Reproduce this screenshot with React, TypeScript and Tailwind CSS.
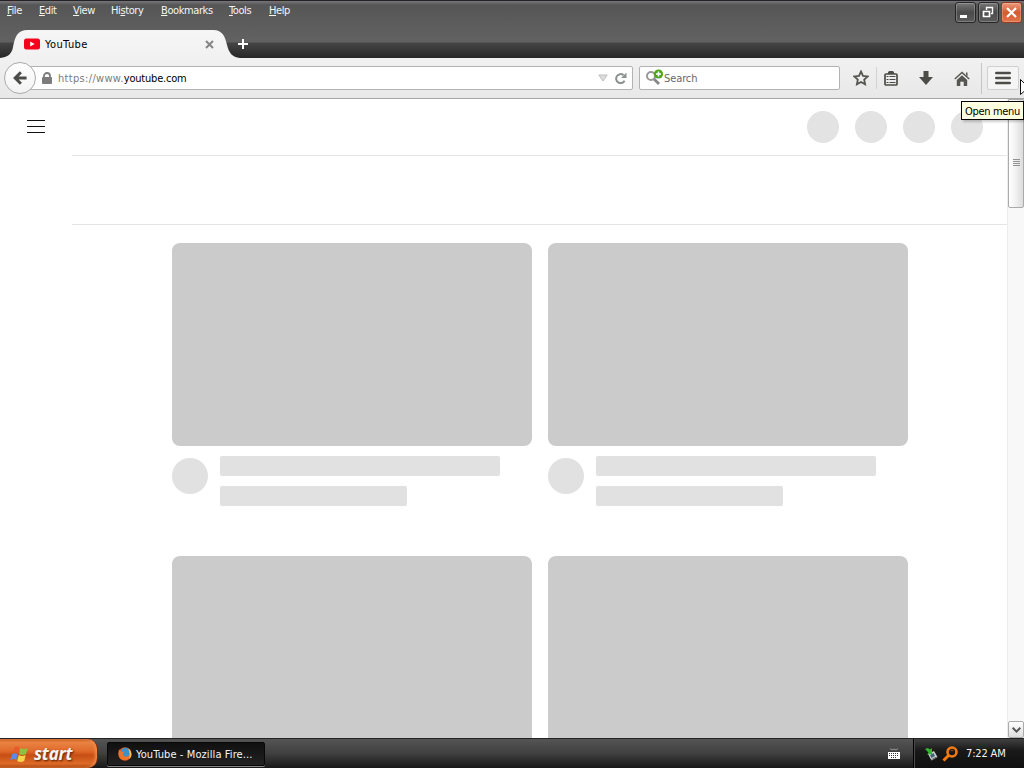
import type { ReactNode } from "react";

interface MenuEntry {
  label: string;
  accessKey: number;
  width: string;
}

const menus: MenuEntry[] = [
  { label: "File", accessKey: 0, width: "w-8" },
  { label: "Edit", accessKey: 0, width: "w-[34px]" },
  { label: "View", accessKey: 0, width: "w-[38px]" },
  { label: "History", accessKey: 2, width: "w-[50px]" },
  { label: "Bookmarks", accessKey: 0, width: "w-[68px]" },
  { label: "Tools", accessKey: 0, width: "w-10" },
  { label: "Help", accessKey: 0, width: "w-8" },
];

function MenuBar() {
  return (
    <nav className="flex pl-[7px] pt-[3px] tracking-[-0.4px] text-[#f4f4f4]">
      {menus.map(({ label, accessKey, width }) => (
        <span key={label} className={`${width} whitespace-nowrap leading-[14px]`}>
          {label.slice(0, accessKey)}
          <span className="underline underline-offset-1">{label[accessKey]}</span>
          {label.slice(accessKey + 1)}
        </span>
      ))}
    </nav>
  );
}

function WindowButton({ label, close, children }: { label: string; close?: boolean; children: ReactNode }) {
  return (
    <button
      aria-label={label}
      className={`h-[21px] w-[21px] rounded-[3px] border ${
        close
          ? "border-[#963b20] bg-linear-to-b from-[#e79b7b] via-[#d65a31] to-[#df7549]"
          : "border-[#252525] bg-linear-to-b from-[#777] via-[#4b4b4b] to-[#5c5c5c]"
      } shadow-[inset_0_0_0_1px_#ffffff38]`}
    >
      <svg width="19" height="19" viewBox="0 0 19 19" fill="none" stroke="#fff">
        {children}
      </svg>
    </button>
  );
}

function WindowControls() {
  return (
    <div className="flex gap-[2px] pr-[2px] pt-px">
      <WindowButton label="Minimize">
        <path d="M4 13.5h7" strokeWidth="3" />
      </WindowButton>
      <WindowButton label="Restore">
        <path d="M7.5 7V4.5h6v6H12M7 4.5h7" strokeWidth="1.4" />
        <path d="M4.5 8.5h6v5h-6zM4 8.5h7" strokeWidth="1.7" />
      </WindowButton>
      <WindowButton label="Close" close>
        <path d="m5 5 9 9M14 5l-9 9" strokeWidth="2.2" />
      </WindowButton>
    </div>
  );
}

function TabStrip() {
  return (
    <div className="flex h-7">
      <div className="relative flex w-[229px] items-center pl-6">
        <svg className="absolute left-0 top-0" width="241" height="28" viewBox="0 0 241 28" aria-hidden="true">
          <defs>
            <linearGradient id="tab" x2="0" y2="1">
              <stop stopColor="#f6f6f6" />
              <stop offset="1" stopColor="#f1f1f1" />
            </linearGradient>
          </defs>
          <path
            d="M0 28C9 27 12 23 13 17 15 7 17 0 28 0H213C223 0 225 7 227 15 229 23 232 27 240 28Z"
            fill="url(#tab)"
          />
        </svg>
        <svg className="relative" width="16" height="12" viewBox="0 0 16 12" aria-hidden="true">
          <rect y=".5" width="16" height="11" rx="2.5" fill="#f5001d" />
          <path d="m6.2 3.5 4.4 2.5-4.4 2.5z" fill="#fff" />
        </svg>
        <span className="relative ml-[5px] flex-1 pt-px tracking-[0.4px] text-black">YouTube</span>
        <svg className="relative mr-[15px]" width="9" height="9" viewBox="0 0 9 9" stroke="#858585" strokeWidth="2">
          <path d="m1 1 7 7M8 1 1 8" />
        </svg>
      </div>
      <svg className="ml-2 mt-2" width="12" height="12" viewBox="0 0 12 12" stroke="#fff" strokeWidth="2">
        <path d="M6 1v10M1 6h10" />
      </svg>
    </div>
  );
}

function Toolbar() {
  return (
    <div className="flex h-[41px] items-center border-b border-[#a5a5a5] bg-linear-to-b from-[#f1f1f1] to-[#e8e8e8] pl-1">
      <button
        aria-label="Back"
        className="relative flex size-8 shrink-0 items-center justify-center rounded-full border border-[#aaa] bg-linear-to-b from-white to-[#f3f3f3]"
      >
        <svg width="14" height="14" viewBox="0 0 16 16" fill="none" stroke="#4c4c48" strokeWidth="3.4">
          <path d="M9 1.5 2.5 8 9 14.5M3 8h12.5" />
        </svg>
      </button>
      <div className="-ml-2 flex h-6 w-[605px] shrink-0 items-center rounded-r-[2px] border border-[#b3b3b3] bg-white pl-[13px] pr-[5px]">
        <svg width="10" height="12" viewBox="0 0 10 12" aria-hidden="true">
          <path d="M2 6V4a3 3 0 0 1 6 0v2" fill="none" stroke="#7c7c7c" strokeWidth="1.8" />
          <rect y="5" width="10" height="7" rx="1" fill="#7c7c7c" />
        </svg>
        <span className="ml-[6px] flex-1 whitespace-nowrap pt-[2px] tracking-[0.32px] text-[#7c7c7c]">
          https://www.<span className="tracking-[-0.2px] text-black">youtube.com</span>
        </span>
        <svg width="10" height="8" viewBox="0 0 10 8" aria-hidden="true">
          <path d="M.8 1h8.4L5 7z" fill="#ddd" stroke="#bebebe" />
        </svg>
        <svg className="ml-[7px]" width="12" height="13" viewBox="0 0 12 13" aria-hidden="true">
          <path d="M9.6 8.8A4.5 4.5 0 1 1 8.5 3.1" fill="none" stroke="#8b9290" strokeWidth="2" />
          <path d="M11.5.5V6H6z" fill="#8b9290" />
        </svg>
      </div>
      <div className="ml-[6px] flex h-6 w-[201px] shrink-0 items-center rounded-[2px] border border-[#b3b3b3] bg-white pl-[6px] text-[#686868]">
        <svg width="18" height="18" viewBox="0 0 18 18" fill="none" aria-hidden="true">
          <circle cx="5" cy="7" r="4" stroke="#999" strokeWidth="2" />
          <path d="m8 10 5 5" stroke="#888" strokeWidth="2.8" />
          <circle cx="12.5" cy="5" r="4.6" fill="#50a51c" />
          <path d="M12.5 2.5v5M10 5h5" stroke="#fff" strokeWidth="1.5" />
        </svg>
        <span className="pt-[2px] tracking-[-0.1px]">Search</span>
      </div>
      <div className="ml-[13px] flex items-center">
        <svg width="16" height="16" viewBox="0 0 16 16" fill="none" stroke="#555550" strokeWidth="1.8">
          <path d="m8 1.5 2 4.3 4.7.6-3.5 3.2.9 4.7L8 12l-4.1 2.3.9-4.7L1.3 6.4 6 5.8z" />
        </svg>
        <span className="ml-[7px] h-[22px] w-px bg-[#d2d2d2]" />
        <svg className="ml-[7px]" width="14" height="15" viewBox="0 0 14 15" fill="none" stroke="#4c4c48">
          <path d="M4 3a3 3 0 0 1 6 0" fill="#4c4c48" />
          <rect x="1" y="3" width="12" height="11" rx="1" strokeWidth="1.7" />
          <path d="M2.5 5.5h2m1 0h6M2.5 8.5h2m1 0h6M2.5 11.5h2m1 0h6" />
        </svg>
        <svg className="ml-[21px]" width="14" height="14" viewBox="0 0 14 14" fill="#4c4c48">
          <path d="M4.500 0h5v6H14l-7 8-7-8h4.500z" />
        </svg>
        <svg className="ml-[21px]" width="16" height="15" viewBox="0 0 16 15" fill="#565652">
          <path d="M.8 8 8 1.5 15.2 8" fill="none" stroke="#565652" strokeWidth="1.5" />
          <path d="M12 1.5h1.5v4L12 4zM8 4.2 13.2 9v6H9.7v-4.2H6.3V15H2.8V9z" />
        </svg>
        <span className="ml-[11px] h-[31px] w-px bg-[#c5c5c5]" />
        <button
          aria-label="Menu"
          className="ml-[5px] flex h-6 w-8 items-center justify-center rounded-[2px] border border-[#d0d0d0] bg-[#f5f5f5]"
        >
          <svg width="16" height="14" viewBox="0 0 16 14" stroke="#4c4c48" strokeWidth="2.6" strokeLinecap="round">
            <path d="M1.3 2h13.4M1.3 7h13.4M1.3 12h13.4" />
          </svg>
        </button>
      </div>
    </div>
  );
}

function VideoPlaceholder() {
  return (
    <div className="h-[313px] w-[360px]">
      <div className="h-[203px] rounded-lg bg-[#cbcbcb]" />
      <div className="flex pt-[10px]">
        <div className="mt-[2px] size-9 rounded-full bg-[#e1e1e1]" />
        <div className="ml-3">
          <div className="h-5 w-[280px] rounded-[2px] bg-[#e1e1e1]" />
          <div className="mt-[10px] h-5 w-[187px] rounded-[2px] bg-[#e1e1e1]" />
        </div>
      </div>
    </div>
  );
}

function Page() {
  return (
    <main className="h-full flex-1 overflow-hidden bg-white">
      <header className="flex h-14 items-center justify-between pl-[27px] pr-6">
        <svg width="18" height="14" viewBox="0 0 18 14" stroke="#111">
          <path d="M0 .5h18M0 6.5h18M0 12.5h18" />
        </svg>
        <div className="flex gap-4">
          {[0, 1, 2, 3].map((i) => (
            <div key={i} className="size-8 rounded-full bg-[#e3e3e3]" />
          ))}
        </div>
      </header>
      <div className="ml-[72px] h-[70px] border-y border-[#e5e5e5]" />
      <div className="ml-[172px] flex w-[736px] flex-wrap gap-x-4 pt-[18px]">
        {[0, 1, 2, 3].map((i) => (
          <VideoPlaceholder key={i} />
        ))}
      </div>
    </main>
  );
}

function Scrollbar() {
  return (
    <div className="flex w-[17px] flex-col justify-between border-l border-[#ececec] bg-[#f8f8f8]">
      <div className="flex h-[109px] items-center justify-center rounded-b-[2px] border border-[#aaa] bg-linear-to-r from-white via-[#f0f0f0] to-[#dcdcdc] pt-[19px]">
        <svg width="7" height="8" viewBox="0 0 7 8" stroke="#929292">
          <path d="M0 .5h7M0 2.5h7M0 4.5h7M0 6.5h7" />
        </svg>
      </div>
      <button
        aria-label="Scroll down"
        className="flex h-[17px] w-4 items-center justify-center rounded-[2px] border border-[#aaa] bg-linear-to-b from-white to-[#ddd]"
      >
        <svg width="9" height="6" viewBox="0 0 9 6" fill="none" stroke="#555" strokeWidth="2">
          <path d="m.7.8 3.8 3.8L8.3.8" />
        </svg>
      </button>
    </div>
  );
}

function Taskbar() {
  return (
    <footer className="flex h-[30px] items-center border-t border-[#222] bg-linear-to-b from-[#555] via-[#404040] via-50% to-[#181818] text-[#f4f4f4]">
      <button className="flex h-full w-[98px] items-center rounded-r-[10px] border-r border-[#7c2900] bg-[linear-gradient(#c45a22,#e98343_12%,#e0692a_42%,#c74e14_56%,#dd6b28_85%,#a4410f)] pl-[10px] shadow-[inset_-2px_0_3px_#f08a4a]">
        <svg width="19" height="18" viewBox="0 0 19 18" aria-hidden="true">
          <path d="M4.2 2.5q2.5-2 5.2-.2L8 8.2q-2.7-2-5.4 0z" fill="#e45b2c" />
          <path d="M10.5 3q3.5 2 7.3 0L16 9q-3.5 2-7 0z" fill="#87c442" />
          <path d="M2.2 9.3q2.7-2 5.5 0L6.2 15q-3-2-6 0z" fill="#588bea" />
          <path d="M8.7 10q3.5 2 7 0l-1.5 6q-3.5 2-7 0z" fill="#f8d448" />
        </svg>
        <span className="ml-[5px] font-['Noto_Sans','Open_Sans',sans-serif] text-[17px] leading-none font-bold italic tracking-[-0.2px] [text-shadow:1px_1px_2px_#542000]">
          start
        </span>
      </button>
      <button className="ml-[9px] flex h-6 w-[158px] items-center rounded-[2px] border border-[#080808] bg-linear-to-b from-[#101010] to-[#222] pl-[10px] shadow-[0_1px_0_#888]">
        <svg width="14" height="14" viewBox="0 0 14 14" aria-hidden="true">
          <circle cx="7" cy="7" r="6.7" fill="#e65b22" />
          <circle cx="7.5" cy="5.6" r="4.8" fill="#3b91ca" />
          <path d="M1 2.5 4 5l3-.5-2 2c0 4 5 4 7 1 0 4-3 6-6 5.5C2 13-.5 9 1 2.5" fill="#ed7428" />
          <path d="M10 1.5c4 2 4.5 8 1 10.5 1-3 1-7-1-10.5" fill="#ffc34b" />
        </svg>
        <span className="ml-1 whitespace-nowrap pt-[2px] tracking-[0.1px]">YouTube - Mozilla Fire...</span>
      </button>
      <svg className="ml-auto" width="12" height="12" viewBox="0 0 12 12" aria-hidden="true">
        <path d="M2 .5 4 2l2-1 2 1 2-1.5" fill="none" stroke="#999" />
        <rect y="4" width="12" height="7" fill="#fff" />
        <path d="M1 5.5h10M1 7.5h10M3 9.5h6" stroke="#333" strokeDasharray="1 1" />
      </svg>
      <div className="ml-[13px] flex h-full w-[111px] items-center border-l border-black bg-linear-to-b from-[#414141] via-[#191919] via-40% to-[#101010] pl-[10px] shadow-[inset_1px_0_0_#4a4a4a]">
        <svg width="15" height="16" viewBox="0 0 15 16" aria-hidden="true">
          <path d="m4 8 6-3 3.5 6-6 3.5z" fill="#c9ced0" />
          <path d="m6 9 3.5-2 1.5 3-3.5 2z" fill="#426475" />
          <path d="m7.5 13.5 5-2.5" stroke="#666" />
          <path d="m1 3 3-1 2 1.5L8 2v6l-5 .5 1.5-2z" fill="#35b535" />
        </svg>
        <svg className="ml-[3px]" width="16" height="16" viewBox="0 0 16 16" fill="none" stroke="#f47b14">
          <circle cx="10" cy="6" r="4.5" strokeWidth="2.6" />
          <path d="m6.5 9.5-5 5" strokeWidth="3" />
          <path d="M8.500 5a2 2 0 0 1 3 0" stroke="#a24b08" />
        </svg>
        <span className="ml-2 whitespace-nowrap pt-px">7:22 AM</span>
      </div>
    </footer>
  );
}

export default function App() {
  return (
    <div className="relative flex h-[768px] w-[1024px] flex-col overflow-hidden bg-white font-['DejaVu_Sans_Condensed','DejaVu_Sans',sans-serif] text-[11px] leading-[14px] font-normal [font-stretch:condensed] tracking-[-0.15px]">
      <div className="h-[58px] border-t border-[#242128] bg-[linear-gradient(#777,#565656_4px,#626262_41px,#454545_42px,#282828)]">
        <div className="flex h-[29px] justify-between">
          <MenuBar />
          <WindowControls />
        </div>
        <TabStrip />
      </div>
      <Toolbar />
      <div className="flex h-[639px]">
        <Page />
        <Scrollbar />
      </div>
      <Taskbar />
      {/* Tooltip and pointer over the menu button */}
      <div className="absolute left-[961px] top-[101px] flex h-[19px] w-[63px] items-center justify-center border border-black bg-[#ffffe1] pt-[2px] tracking-[-0.3px] whitespace-nowrap text-black shadow-[2px_2px_2px_#0003]">
        Open menu
      </div>
      <svg className="absolute left-[1020px] top-[79px]" width="4" height="17" viewBox="0 0 4 17" fill="#fff" stroke="#111">
        <path d="M.5.5v15l4-3.5V4.5z" />
      </svg>
    </div>
  );
}
